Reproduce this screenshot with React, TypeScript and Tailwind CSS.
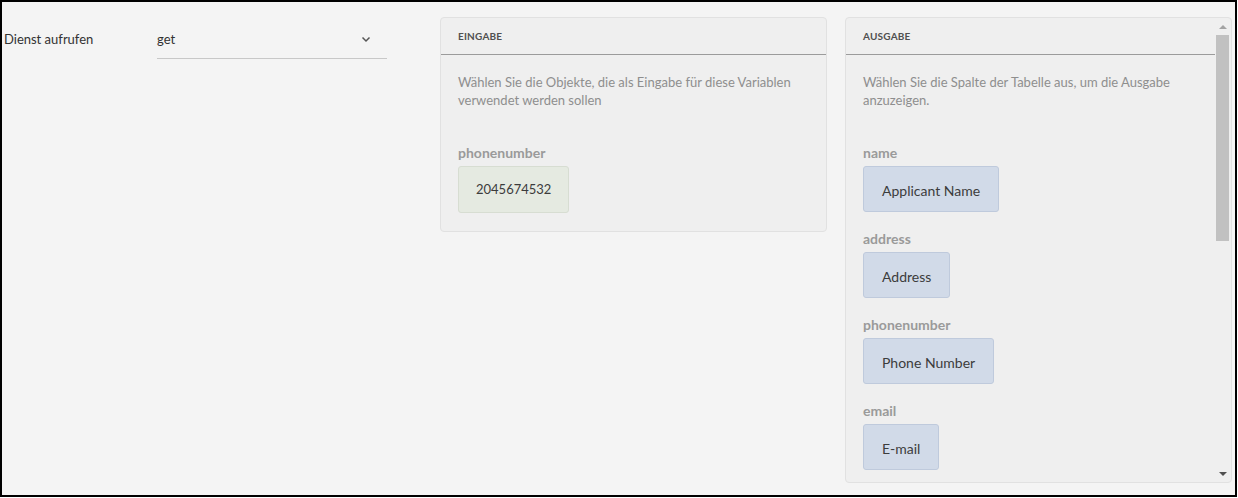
import React from 'react';

const outputs = [
  { key: 'name', label: 'Applicant Name' },
  { key: 'address', label: 'Address' },
  { key: 'phonenumber', label: 'Phone Number' },
  { key: 'email', label: 'E-mail' },
];

const Field = ({ name, value, tone }: { name: string; value: string; tone: 'green' | 'blue' }) => (
  <div className="flex flex-col items-start">
    <div className="text-[14px] leading-[18px] font-bold text-[#9a9a9a]">{name}</div>
    <div
      className={
        tone === 'green'
          ? 'mt-1 h-[47px] pt-[1px] px-[17px] flex items-center rounded-[3px] border border-[#d7ddd2] bg-[#e5eae1] text-[13px] text-[#3c3c3c]'
          : 'mt-1 h-[46px] pt-[2px] px-[18px] flex items-center rounded-[3px] border border-[#bfcadc] bg-[#d1dae8] text-[14px] text-[#3c3c3c]'
      }
    >
      {value}
    </div>
  </div>
);

const App = () => {
  return (
    <div className="w-[1238px] h-[498px] bg-white font-['Lato',sans-serif]">
      <div className="w-[1237px] h-[497px] border-2 border-black bg-[#f4f4f4] flex items-start">
        {/* Dienst aufrufen */}
        <div className="flex items-start pt-[27px] pl-[2px]">
          <div className="w-[153px] text-[13px] leading-[20px] text-[#323232]">Dienst aufrufen</div>
          <div className="w-[230px] h-[30px] border-b border-[#c8c8c8] flex items-start justify-between pr-[16px]">
            <span className="text-[13px] leading-[20px] text-[#323232]">get</span>
            <svg width="10" height="20" viewBox="0 0 10 20" className="text-[#555]">
              <path d="M1.5 8.5 L5 12 L8.5 8.5" fill="none" stroke="currentColor" strokeWidth="1.5" />
            </svg>
          </div>
        </div>

        {/* Eingabe */}
        <div className="ml-[53px] mt-[15px] w-[387px] rounded-[4px] border border-[#e1e1e1] bg-[#efefef]">
          <div className="h-[37px] flex items-center px-[17px] border-b border-[#9b9b9b] text-[10px] font-bold tracking-[0.2px] text-[#505050]">
            EINGABE
          </div>
          <div className="px-[17px] pt-[18px] pb-[18px]">
            <p className="text-[13px] leading-[18px] text-[#8e8e8e]">
              Wählen Sie die Objekte, die als Eingabe für diese Variablen verwendet werden sollen
            </p>
            <div className="mt-[35px]">
              <Field name="phonenumber" value="2045674532" tone="green" />
            </div>
          </div>
        </div>

        {/* Ausgabe */}
        <div className="ml-[18px] mt-[15px] w-[387px] h-[466px] rounded-[4px] border border-[#e1e1e1] bg-[#efefef] flex overflow-hidden">
          <div className="flex-1 min-w-0">
            <div className="h-[37px] flex items-center px-[17px] border-b border-[#9b9b9b] text-[10px] font-bold tracking-[0.2px] text-[#505050]">
              AUSGABE
            </div>
            <div className="px-[17px] pt-[18px]">
              <p className="text-[13px] leading-[18px] text-[#8e8e8e]">
                Wählen Sie die Spalte der Tabelle aus, um die Ausgabe anzuzeigen.
              </p>
              <div className="mt-[35px] flex flex-col gap-[18px]">
                {outputs.map(o => (
                  <Field key={o.key} name={o.key} value={o.label} tone="blue" />
                ))}
              </div>
            </div>
          </div>
          {/* scrollbar */}
          <div className="w-[16px] shrink-0 flex flex-col items-center pr-[1px]">
            <div className="h-[17px] flex items-center justify-center">
              <div className="w-0 h-0 border-l-[4px] border-r-[4px] border-b-[4px] border-l-transparent border-r-transparent border-b-[#a3a3a3]" />
            </div>
            <div className="w-[13px] h-[206px] bg-[#c1c1c1]" />
            <div className="flex-1" />
            <div className="h-[17px] flex items-center justify-center">
              <div className="w-0 h-0 border-l-[4px] border-r-[4px] border-t-[4px] border-l-transparent border-r-transparent border-t-[#505050]" />
            </div>
          </div>
        </div>
      </div>
    </div>
  );
};

export default App;
